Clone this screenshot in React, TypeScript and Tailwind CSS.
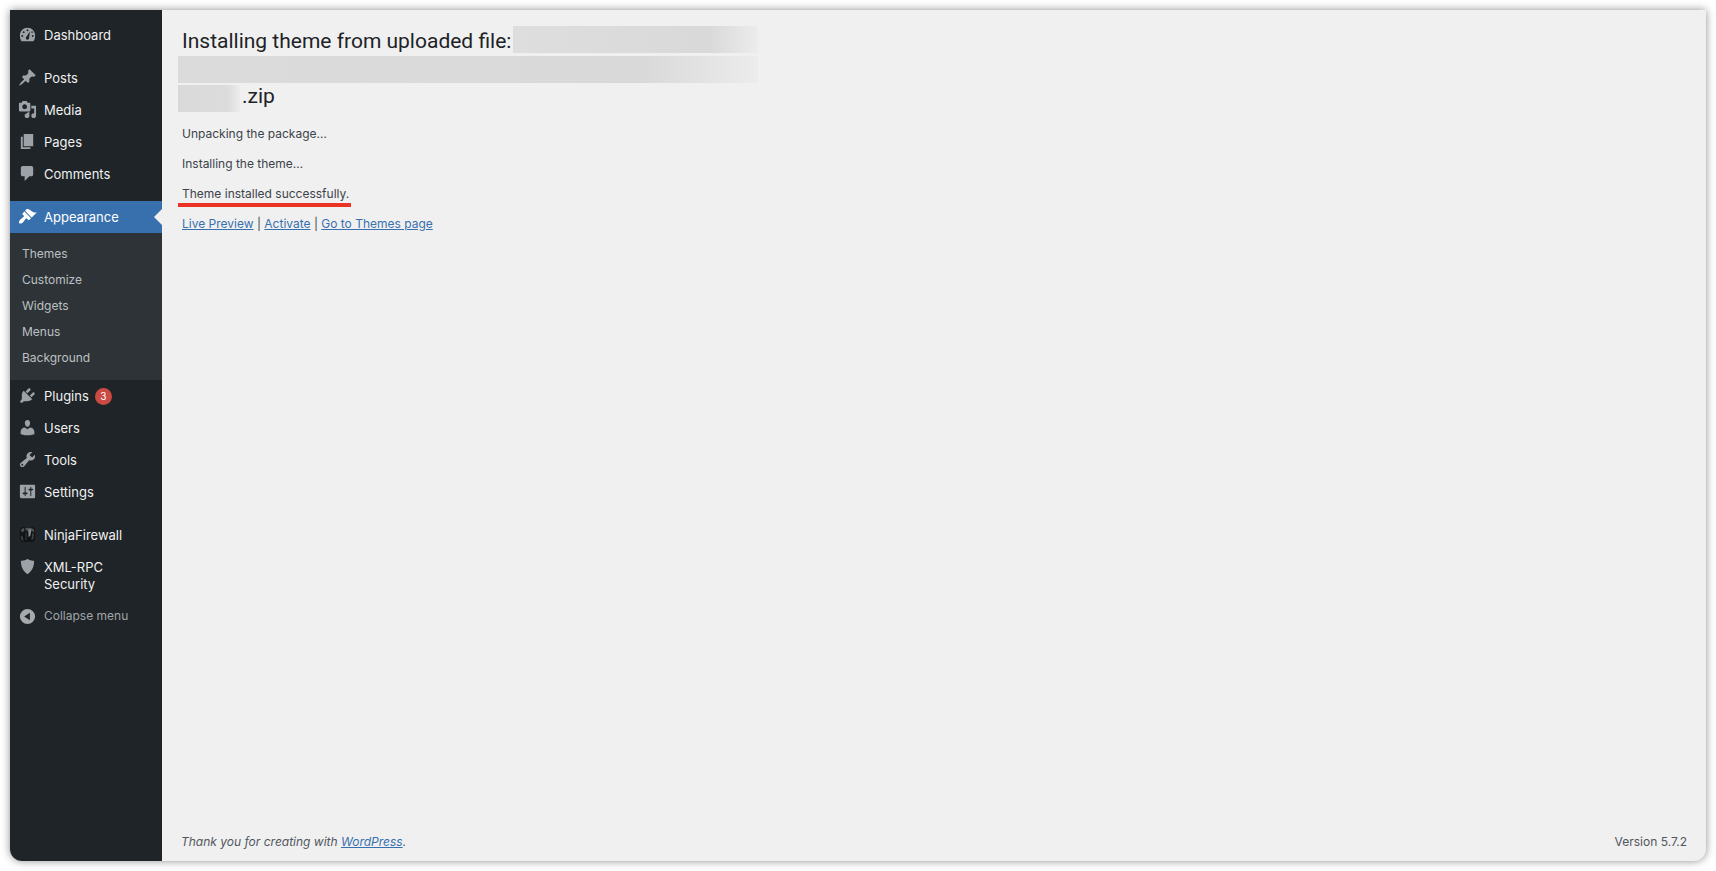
import React from 'react'

interface IconProps {
    name: string
    className?: string
}

interface MenuEntry {
    label: string
    icon: string
    badge?: number
    current?: boolean
    children?: string[]
}

const ICON_PATHS: Record<string, string> = {
    dashboard: 'M3.76 17h12.48c1.34-1.59 1.76-3.67 1.76-6 0-4.42-3.58-8-8-8s-8 3.58-8 8c0 2.33.42 4.41 1.76 6zM9 5.500a1 1 0 1 0 2 0a1 1 0 1 0-2 0zM5 7.500a1 1 0 1 0 2 0a1 1 0 1 0-2 0zM3.500 11.500a1 1 0 1 0 2 0a1 1 0 1 0-2 0zM14.500 11.500a1 1 0 1 0 2 0a1 1 0 1 0-2 0zM14 7.500a.8.8 0 1 0 1.600 0a.8.8 0 1 0-1.600 0zM12.600 6.500l-.9 7.300c-.1 1-.8 1.700-1.700 1.700-1 0-1.800-.8-1.800-1.800 0-.5.2-1 .6-1.400z',
    post: 'M10.44 3.02l1.82-1.82 6.36 6.35-1.83 1.82c-1.05-.68-2.48-.57-3.41.36l-.75.75c-.92.93-1.04 2.35-.35 3.41l-1.83 1.82-2.41-2.41-2.8 2.79c-.42.42-3.38 2.71-3.8 2.29s1.86-3.39 2.28-3.81l2.79-2.79L4.1 9.36l1.83-1.82c1.05.69 2.48.57 3.4-.36l.75-.75c.93-.92 1.05-2.35.36-3.41z',
    media: 'M13 11V4c0-.55-.45-1-1-1h-1.67L9 1H5L3.67 3H2c-.55 0-1 .45-1 1v7c0 .55.45 1 1 1h10c.55 0 1-.45 1-1zM7 4.5c1.38 0 2.5 1.12 2.5 2.5S8.38 9.5 7 9.5 4.5 8.38 4.5 7 5.62 4.5 7 4.5zM14 6h5v10.5c0 1.38-1.12 2.5-2.5 2.5S14 17.88 14 16.5s1.12-2.5 2.5-2.5c.17 0 .34.02.5.05V9h-3V6zm-4 8.05V13h2v3.5c0 1.38-1.12 2.5-2.5 2.5S7 17.88 7 16.5 8.12 14 9.5 14c.17 0 .34.02.5.05z',
    page: 'M6 15V2h10v13H6zm-1 1h8v2H3V5h2v11z',
    comments: 'M5 2h9c1.1 0 2 .9 2 2v7c0 1.1-.9 2-2 2h-2l-5 5v-5H5c-1.1 0-2-.9-2-2V4c0-1.1.9-2 2-2z',
    appearance: 'M14.48 11.06L7.41 3.99l1.5-1.5c.5-.56 2.3-.47 3.51.32 1.21.8 1.43 1.28 2.91 2.1 1.18.64 2.45 1.26 4.45.85zm-.71.71L6.7 4.7 4.93 6.47c-.39.39-.39 1.02 0 1.41l1.06 1.06c.39.39.39 1.03 0 1.42-.6.6-1.43 1.11-2.21 1.69-.35.26-.7.53-1.01.84C1.43 14.23.4 16.08 1.4 17.07c.99 1 2.84-.03 4.18-1.36.31-.31.58-.66.85-1.02.57-.78 1.08-1.61 1.69-2.21.39-.39 1.02-.39 1.41 0l1.06 1.06c.39.39 1.02.39 1.41 0z',
    plugins: 'M13.11 4.36L9.87 7.6 8 5.73l3.24-3.24c.35-.34 1.05-.2 1.56.32.52.51.66 1.21.31 1.55zm-8 1.77l.91-1.12 9.01 9.01-1.19.84c-.71.71-2.63 1.16-3.82 1.16H6.14L4.9 17.26c-.59.59-1.54.59-2.12 0-.59-.58-.59-1.53 0-2.12l1.24-1.24v-3.88c0-1.13.4-3.19 1.09-3.89zm7.26 3.97l3.24-3.24c.34-.35 1.04-.21 1.55.31.52.51.66 1.21.31 1.55l-3.24 3.25z',
    users: 'M10 9.25c-2.27 0-2.73-3.44-2.73-3.44C7 4.02 7.82 2 9.97 2c2.16 0 2.98 2.02 2.71 3.81 0 0-.41 3.44-2.68 3.44zm0 2.57L12.72 10c2.39 0 4.52 2.33 4.52 4.53v2.49s-3.65 1.13-7.24 1.13c-3.65 0-7.24-1.13-7.24-1.13v-2.49c0-2.25 1.94-4.48 4.47-4.48z',
    tools: 'M16.68 9.77c-1.34 1.34-3.3 1.67-4.95.99l-5.41 6.52c-.99.99-2.59.99-3.58 0s-.99-2.59 0-3.57l6.52-5.42c-.68-1.65-.35-3.61.99-4.95 1.28-1.28 3.12-1.62 4.72-1.06l-2.89 2.89 2.82 2.82 2.86-2.87c.53 1.58.18 3.39-1.08 4.65zM3.81 16.21c.4.39 1.04.39 1.43 0 .4-.4.4-1.04 0-1.43-.39-.4-1.03-.4-1.43 0-.39.39-.39 1.03 0 1.43z',
    settings: 'M18 16V4c0-.55-.45-1-1-1H3c-.55 0-1 .45-1 1v12c0 .55.45 1 1 1h14c.55 0 1-.45 1-1zM8 11h1c.55 0 1 .45 1 1s-.45 1-1 1H8v1.5c0 .28-.22.5-.5.5s-.5-.22-.5-.5V13H6c-.55 0-1-.45-1-1s.45-1 1-1h1V5.5c0-.28.22-.5.5-.5s.5.22.5.5V11zm5-2h-1c-.55 0-1-.45-1-1s.45-1 1-1h1V5.5c0-.28.22-.5.5-.5s.5.22.5.5V7h1c.55 0 1 .45 1 1s-.45 1-1 1h-1v5.5c0 .28-.22.5-.5.5s-.5-.22-.5-.5V9z',
    shield: 'M10 2s3 2 7 2c0 11-7 14-7 14S3 15 3 4c4 0 7-2 7-2z',
    collapse: 'M10 2a8 8 0 1 0 0 16a8 8 0 1 0 0-16zM12.500 6v8L6.500 10z',
}

const MENU_GROUPS: MenuEntry[][] = [
    [{ label: 'Dashboard', icon: 'dashboard' }],
    [
        { label: 'Posts', icon: 'post' },
        { label: 'Media', icon: 'media' },
        { label: 'Pages', icon: 'page' },
        { label: 'Comments', icon: 'comments' },
    ],
    [
        { label: 'Appearance', icon: 'appearance', current: true, children: ['Themes', 'Customize', 'Widgets', 'Menus', 'Background'] },
        { label: 'Plugins', icon: 'plugins', badge: 3 },
        { label: 'Users', icon: 'users' },
        { label: 'Tools', icon: 'tools' },
        { label: 'Settings', icon: 'settings' },
    ],
    [
        { label: 'NinjaFirewall', icon: 'ninja' },
        { label: 'XML-RPC Security', icon: 'shield' },
    ],
]

const Icon: React.FC<IconProps> = ({ name, className = 'text-[#9ca2a7]' }) => {
    if (name === 'ninja') {
        return (
            <svg className="h-[19px] w-[19px] shrink-0" viewBox="0 0 20 20" aria-hidden="true">
                <rect x="2" y="2" width="16" height="16" rx="4" fill="#111415" />
                <path fill="#4d5153" d="M3 5l3-2 1 3-3 2zM7 3h7l3 2v3l-3-2-3 1-2-1z" />
                <path fill="#85898b" d="M11 5l2-1 1 2-1 5-2 2z" />
                <path fill="#3c4042" d="M3 11l2 1 1 5-3-2zM15 8l2 2-1 5-2 1zM8 8h1v8H8z" />
            </svg>
        )
    }
    return (
        <svg className={`h-[19px] w-[19px] shrink-0 ${className}`} fill="currentColor" fillRule="evenodd" viewBox="0 0 20 20" aria-hidden="true">
            <path d={ICON_PATHS[name]} />
        </svg>
    )
}

const MenuItem: React.FC<{ item: MenuEntry }> = ({ item }) => (
    <li>
        <a
            href="#"
            className={`relative flex min-h-8 gap-[7px] pl-2 pr-6 text-[13px] leading-[17px] ${item.current ? 'bg-[#3870ae] text-white' : 'text-[#f0f0f1]'}`}
        >
            <span className="flex h-[31px] items-center">
                <Icon name={item.icon} className={item.current ? 'text-white' : 'text-[#9ca2a7]'} />
            </span>
            <span className="flex gap-1.5 pb-[7px] pt-2">
                {item.label}
                {item.badge && (
                    <span className="flex h-[17px] w-[17px] items-center justify-center rounded-full bg-[#ca4a44] text-[10px] text-white">{item.badge}</span>
                )}
            </span>
            {item.current && (
                <svg className="absolute right-0 top-2 h-4 w-2" viewBox="0 0 8 16" aria-hidden="true">
                    <path fill="#f0f0f0" d="M8 0v16L0 8z" />
                </svg>
            )}
        </a>
        {item.children && (
            <ul className="bg-[#2d3337] pb-[9px] pt-2">
                {item.children.map((child) => (
                    <li key={child}>
                        <a href="#" className="block px-3 text-xs leading-[26px] text-[#bdc0c2]">{child}</a>
                    </li>
                ))}
            </ul>
        )}
    </li>
)

const Sidebar: React.FC = () => (
    <nav className="w-[152px] shrink-0 bg-[#1e2427] pt-[9px]" aria-label="Main menu">
        <div className="flex flex-col gap-[11px]">
            {MENU_GROUPS.map((group, i) => (
                <ul key={i}>
                    {group.map((item) => <MenuItem key={item.label} item={item} />)}
                </ul>
            ))}
        </div>
        <button type="button" className="flex h-8 w-full items-center gap-[7px] pl-2 text-left text-xs text-[#a0a5a9]">
            <Icon name="collapse" className="text-[#a7aaad]" />
            Collapse menu
        </button>
    </nav>
)

const LINK = 'text-[#3870ae] underline'

const App: React.FC = () => (
    <div className="flex min-h-screen bg-white p-2.5 font-['Inter','Liberation_Sans',sans-serif]">
        <div className="flex flex-1 overflow-hidden rounded-b-xl bg-[#f0f0f0] shadow-[0_0_8px_rgba(0,0,0,0.45)]">
            <Sidebar />
            <div className="flex flex-1 flex-col justify-between pl-4 pr-[19px]">
                <main className="pt-4 text-xs leading-[18px] text-[#3c434a]">
                    {/* Archive name is redacted */}
                    <h1 className="font-['Roboto','Liberation_Sans',sans-serif] text-[21px] leading-[30px] text-[#1d2327]">
                        <span className="flex w-[580px] gap-0.5 pl-1">
                            <span className="shrink-0">Installing theme from uploaded file:</span>
                            <span className="h-[27px] flex-1 bg-linear-to-r from-[#dedede] via-[#d9d9d9] via-80% to-[#ececec]" />
                        </span>
                        <span className="block h-[27px] w-[580px] bg-linear-to-r from-[#dbdbdb] via-[#d9d9d9] via-80% to-[#ececec]" />
                        <span className="mt-0.5 flex h-7 gap-0.5">
                            <span className="h-[27px] w-[62px] bg-linear-to-r from-[#d9d9d9] via-[#dcdcdc] via-80% to-[#ececec]" />
                            <span className="-mt-1">.zip</span>
                        </span>
                    </h1>
                    <div className="flex flex-col items-start gap-3 pt-3">
                        <p className="pl-1">Unpacking the package…</p>
                        <p className="pl-1">Installing the theme…</p>
                        <p className="relative pl-1 pr-0.5">
                            Theme installed successfully.
                            <span className="absolute inset-x-0 -bottom-1 h-1 bg-[#ea3323]" />
                        </p>
                        <p className="pl-1">
                            <a href="#" className={LINK}>Live Preview</a> | <a href="#" className={LINK}>Activate</a> | <a href="#" className={LINK}>Go to Themes page</a>
                        </p>
                    </div>
                </main>
                <footer className="flex justify-between pb-2.5 pl-[3px] text-xs leading-[18px] text-[#50575e]">
                    <p className="italic">Thank you for creating with <a href="#" className={LINK}>WordPress</a>.</p>
                    <p>Version 5.7.2</p>
                </footer>
            </div>
        </div>
    </div>
)

export default App
